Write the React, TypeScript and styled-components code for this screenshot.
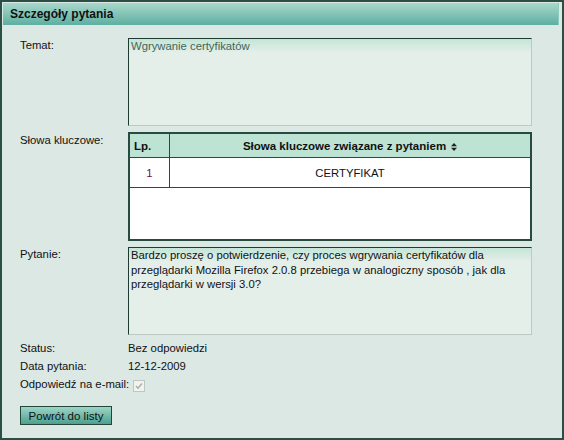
import styled, { createGlobalStyle } from 'styled-components';

const GlobalStyle = createGlobalStyle`
  html, body {
    margin: 0;
    padding: 0;
    background: #ffffff;
  }
  body {
    font-family: 'Liberation Sans', Arial, sans-serif;
    font-size: 11.3px;
    color: #111;
  }
`;

const Panel = styled.div`
  box-sizing: border-box;
  width: 564px;
  height: 440px;
  border: 2px solid #2b4f44;
  background: #dce8e3;
  display: flex;
  flex-direction: column;
`;

const PanelHeader = styled.h1`
  box-sizing: border-box;
  margin: 1px 3px 0 1px;
  height: 22px;
  padding: 0 7px;
  display: flex;
  align-items: center;
  font-size: 12px;
  font-weight: bold;
  color: #111;
  background: linear-gradient(#a9d8cc, #5dafa1);
  border-right: 1px solid #8ccabc;
`;

const Content = styled.div`
  padding: 13px 0 0 18px;
`;

const FieldGrid = styled.div`
  display: grid;
  grid-template-columns: 108px 404px;
  row-gap: 6px;
`;

const Label = styled.div<{ $offset?: number }>`
  line-height: 14px;
  padding-top: ${({ $offset }) => $offset ?? 0}px;
`;

const ReadOnlyBox = styled.div<{ $padTop?: number }>`
  box-sizing: border-box;
  height: 88px;
  padding: ${({ $padTop }) => $padTop ?? 0}px 2px 0 2px;
  border-style: solid;
  border-width: 1px;
  border-color: #1f3a31 #bccac3 #bccac3 #1f3a31;
  background: linear-gradient(#c4e5d7, #e5efea 14px, #e5efea);
  line-height: 14.5px;
`;

const SubjectText = styled.span`
  color: #3f6659;
  line-height: 13px;
`;

const KeywordBox = styled.div`
  box-sizing: border-box;
  height: 109px;
  border: 2px solid #284a3f;
  background: #ffffff;
`;

const KeywordTable = styled.table`
  width: 100%;
  border-collapse: collapse;
`;

const HeadCell = styled.th<{ $narrow?: boolean }>`
  height: 23px;
  padding: 0 4px;
  background: #bde3d4;
  border-bottom: 1px solid #284a3f;
  border-left: ${({ $narrow }) => ($narrow ? 'none' : '1px solid #284a3f')};
  width: ${({ $narrow }) => ($narrow ? '31px' : 'auto')};
  text-align: ${({ $narrow }) => ($narrow ? 'left' : 'center')};
  font-size: 11.5px;
  font-weight: bold;
  color: #111;
`;

const Cell = styled.td<{ $narrow?: boolean }>`
  height: 29px;
  padding: 0;
  text-align: center;
  border-bottom: 1px solid #284a3f;
  border-left: ${({ $narrow }) => ($narrow ? 'none' : '1px solid #284a3f')};
  color: ${({ $narrow }) => ($narrow ? '#7a0f45' : '#111')};
`;

const SortIcon = () => (
  <svg width="6" height="8" viewBox="0 0 6 8" style={{ marginLeft: 5, verticalAlign: -1 }}>
    <path d="M0 3.2 L3 0 L6 3.2 Z M0 4.8 L3 8 L6 4.8 Z" fill="#222" />
  </svg>
);

const InfoList = styled.div`
  margin-top: 4px;
  display: grid;
  grid-template-columns: 108px auto;
  grid-auto-rows: 18px;
  align-items: center;
  white-space: nowrap;
`;

const CheckBox = styled.span`
  box-sizing: border-box;
  width: 12px;
  height: 12px;
  margin-left: 5px;
  margin-top: 4px;
  border: 1px solid #c0c7c2;
  background: #f1f3ef;
  display: inline-flex;
  align-items: center;
  justify-content: center;
`;

const BackButton = styled.button`
  margin-top: 13px;
  box-sizing: border-box;
  width: 92px;
  height: 19px;
  padding: 0;
  border: 1px solid #264538;
  background: linear-gradient(#9ad6c7, #4e9f90);
  font-family: 'Liberation Sans', Arial, sans-serif;
  font-size: 11.5px;
  color: #111;
  cursor: pointer;
`;

export default function App() {
  return (
    <>
      <GlobalStyle />
      <Panel>
        <PanelHeader>Szczegóły pytania</PanelHeader>
        <Content>
          <FieldGrid>
            <Label>Temat:</Label>
            <ReadOnlyBox>
              <SubjectText>Wgrywanie certyfikatów</SubjectText>
            </ReadOnlyBox>

            <Label $offset={1}>Słowa kluczowe:</Label>
            <KeywordBox>
              <KeywordTable>
                <thead>
                  <tr>
                    <HeadCell $narrow>Lp.</HeadCell>
                    <HeadCell>
                      Słowa kluczowe związane z pytaniem
                      <SortIcon />
                    </HeadCell>
                  </tr>
                </thead>
                <tbody>
                  <tr>
                    <Cell $narrow>1</Cell>
                    <Cell>CERTYFIKAT</Cell>
                  </tr>
                </tbody>
              </KeywordTable>
            </KeywordBox>

            <Label>Pytanie:</Label>
            <ReadOnlyBox $padTop={0}>
              Bardzo proszę o potwierdzenie, czy proces wgrywania certyfikatów dla przeglądarki
              Mozilla Firefox 2.0.8 przebiega w analogiczny sposób , jak dla przeglądarki w wersji
              3.0?
            </ReadOnlyBox>
          </FieldGrid>

          <InfoList>
            <span>Status:</span>
            <span>Bez odpowiedzi</span>
            <span>Data pytania:</span>
            <span>12-12-2009</span>
            <span>Odpowiedź na e-mail:</span>
            <span>
              <CheckBox>
                <svg width="8" height="8" viewBox="0 0 8 8">
                  <path d="M1 4 L3 6.2 L7 1.5" fill="none" stroke="#a7ada9" strokeWidth="1.4" />
                </svg>
              </CheckBox>
            </span>
          </InfoList>

          <BackButton type="button">Powrót do listy</BackButton>
        </Content>
      </Panel>
    </>
  );
}
